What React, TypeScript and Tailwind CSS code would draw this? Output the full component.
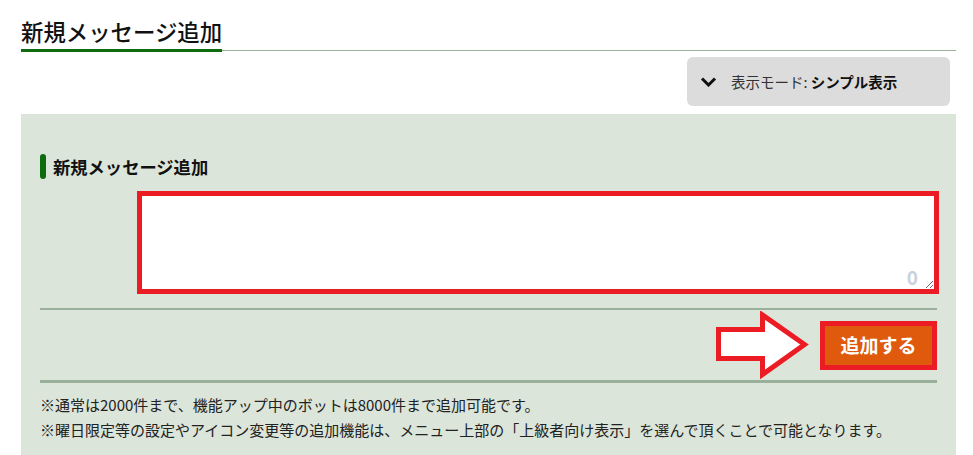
import React from "react";

export default function App() {
  return (
    <div className="w-[973px] h-[455px] overflow-hidden bg-white font-['Noto_Sans_CJK_JP','Noto_Sans',sans-serif] text-[#111]">
      <div className="ml-[21px] w-[935px]">
        <div className="h-[51px] flex items-end border-b border-[#9bb09b]">
          <h1 className="text-[22.4px] leading-[30px] font-medium border-b-[3px] border-[#0e6b0e] mb-[-2px] pb-[3px] text-[#111]">
            新規メッセージ追加
          </h1>
        </div>
        <div className="flex justify-end pr-[6px] mt-[6px]">
          <div className="w-[263px] h-[49px] rounded-[6px] bg-[#dcdcdc] flex items-center pl-[13px]">
            <svg width="17" height="10" viewBox="0 0 17 10" className="mr-[14px]">
              <polyline points="2,1.5 8.5,8 15,1.5" fill="none" stroke="#111" strokeWidth="3" />
            </svg>
            <span className="text-[14.5px] text-[#333] whitespace-pre">表示モード: </span>
            <span className="text-[14.5px] font-bold text-[#111]">シンプル表示</span>
          </div>
        </div>
        <div className="mt-[8px] bg-[#dbe5da] pt-[40px] px-[19px] pb-[20px]">
          <div className="flex items-center h-[25px]">
            <div className="w-[6px] h-[25px] rounded-[3px] bg-[#0e6b0e] mr-[7px]"></div>
            <span className="text-[17.3px] font-bold text-[#111]">新規メッセージ追加</span>
          </div>
          <div className="relative mt-[12px] ml-[97px] w-[802px] h-[103px]">
            <textarea className="block w-full h-full border-[5px] border-[#ec1c24] bg-white outline-none p-2 text-[15px]"></textarea>
            <span className="absolute right-[21px] bottom-[8px] text-[19px] font-bold text-[#c9d2dc] leading-none">0</span>
          </div>
          <div className="mt-[14px] h-[2px] bg-[#9bb09b]"></div>
          <div className="h-[70px] flex justify-end items-center">
            <svg width="94" height="68" viewBox="0 0 94 68" className="mr-[10px]">
              <polygon
                points="2.5,18.5 46.5,18.5 46.5,4 88.5,33.5 46.5,63.5 46.5,47.5 2.5,47.5"
                fill="#fff"
                stroke="#ec1c24"
                strokeWidth="5"
                strokeLinejoin="miter"
              />
            </svg>
            <div className="w-[117px] h-[49px] border-[5px] border-[#ec1c24] bg-[#e05a0e] flex items-center justify-center">
              <span className="text-[19px] font-bold text-white">追加する</span>
            </div>
          </div>
          <div className="h-[3px] bg-[#9bb09b]"></div>
          <div className="mt-[9px] text-[15px] leading-[25px] text-[#222]">
            <p>※通常は2000件まで、機能アップ中のボットは8000件まで追加可能です。</p>
            <p>※曜日限定等の設定やアイコン変更等の追加機能は、メニュー上部の「上級者向け表示」を選んで頂くことで可能となります。</p>
          </div>
        </div>
      </div>
    </div>
  );
}
